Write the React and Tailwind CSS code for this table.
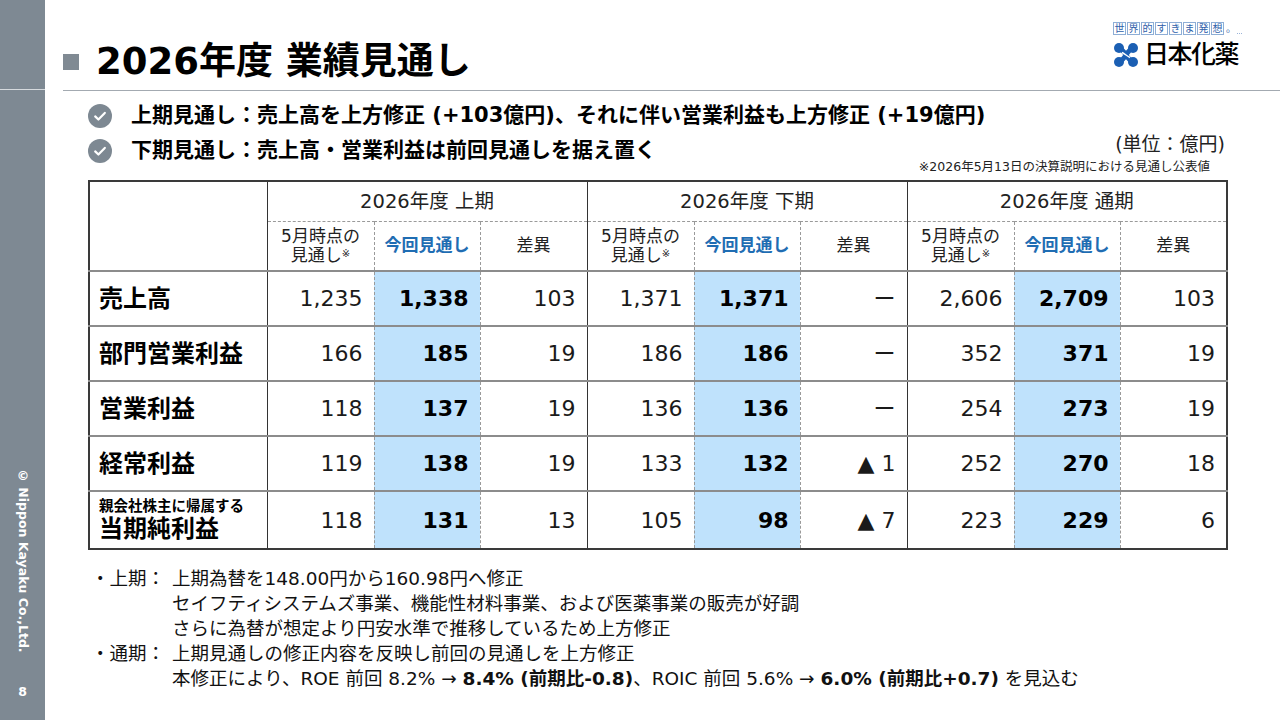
import React from "react";

const rows = [
  { label: "売上高", v: ["1,235", "1,338", "103", "1,371", "1,371", "ー", "2,606", "2,709", "103"] },
  { label: "部門営業利益", v: ["166", "185", "19", "186", "186", "ー", "352", "371", "19"] },
  { label: "営業利益", v: ["118", "137", "19", "136", "136", "ー", "254", "273", "19"] },
  { label: "経常利益", v: ["119", "138", "19", "133", "132", "▲ 1", "252", "270", "18"] },
  { label: null, v: ["118", "131", "13", "105", "98", "▲ 7", "223", "229", "6"] },
];

const groups = ["2026年度 上期", "2026年度 下期", "2026年度 通期"];

function CheckIcon() {
  return (
    <svg width="24" height="24" viewBox="0 0 24 24" className="shrink-0">
      <circle cx="12" cy="12" r="12" fill="#7d8892" />
      <path d="M7.2 12.4l3.2 3.1 6.4-6.6" fill="none" stroke="#fff" strokeWidth="2.2" strokeLinecap="round" strokeLinejoin="round" />
    </svg>
  );
}

function Logo() {
  const boxed = ["世", "界", "的", "す", "き", "ま", "発", "想"];
  return (
    <div className="flex flex-col pt-[22px]">
      <div className="flex items-center gap-[1px]">
        {boxed.map((c) => (
          <span key={c} className="shrink-0 w-[13px] h-[13px] border border-[#8eaed6] text-[#2f61aa] text-[10px] leading-[11px] flex items-center justify-center">
            {c}
          </span>
        ))}
        <span className="shrink-0 text-[#2f61aa] text-[10px] leading-[10px] ml-[1px]">。</span>
        <span className="shrink-0 w-[5px] border-b border-dotted border-[#9bb4d8] self-end mb-[1px]" />
      </div>
      <div className="flex items-center mt-[7px]">
        <svg width="26" height="26" viewBox="0 0 26 26" className="shrink-0">
          <g fill="#1b5fb3">
            <circle cx="6" cy="6" r="5" />
            <circle cx="20" cy="6" r="5" />
            <circle cx="6" cy="20" r="5" />
            <circle cx="20" cy="20" r="5" />
          </g>
          <path d="M6 6 C 13 9, 13 17, 20 20" fill="none" stroke="#1b5fb3" strokeWidth="5" />
          <path d="M20 6 C 13 9, 13 17, 6 20" fill="none" stroke="#1b5fb3" strokeWidth="5" />
          <path d="M9 10.5 C 12 12, 14 14, 17 15.5" fill="none" stroke="#fff" strokeWidth="1.4" />
        </svg>
        <span className="ml-[5px] text-[25px] leading-[26px] font-medium tracking-[-1.5px] text-black">日本化薬</span>
      </div>
    </div>
  );
}

function SubHeader({ i }) {
  const last = i % 3 === 2;
  const rb = last ? "[border-right:1px_solid_#333]" : "[border-right:1px_dashed_#9a9a9a]";
  const kind = i % 3;
  return (
    <th className={`${rb} [border-bottom:2px_solid_#8c8c8c] font-normal text-center align-middle`}>
      {kind === 0 && (
        <div className="text-[17px] leading-[19px] text-[#222]">
          5月時点の
          <br />
          見通し<span className="text-[10px] align-top relative top-[-2px]">※</span>
        </div>
      )}
      {kind === 1 && <div className="text-[17px] font-bold text-[#1f6db3]">今回見通し</div>}
      {kind === 2 && <div className="text-[17px] text-[#222]">差異</div>}
    </th>
  );
}

function App() {
  return (
    <div className="flex w-[1280px] h-[720px] bg-white overflow-hidden font-['DejaVu_Sans','Noto_Sans_CJK_JP',sans-serif] text-[#111]">
      {/* sidebar */}
      <aside className="w-[45px] shrink-0 bg-[#7e8993] flex flex-col">
        <div className="h-[90px] border-b-[1.5px] border-[#d6dade]" />
        <div className="flex-1 flex flex-col items-center justify-end pb-[21px]">
          <span className="[writing-mode:vertical-rl] text-white font-bold text-[12.5px] leading-[14px]">
            © Nippon Kayaku Co.,Ltd.
          </span>
          <span className="mt-[32px] text-white font-bold text-[12.5px] leading-[14px]">8</span>
        </div>
      </aside>

      <main className="w-[1235px] min-w-0 shrink-0 flex flex-col">
        {/* header */}
        <header className="ml-[18px] h-[91px] border-b border-[#a3aab1] flex justify-between pr-[38px]">
          <div className="flex items-center pt-[34px]">
            <span className="w-[16px] h-[16px] bg-[#808a93]" />
            <h1 className="ml-[17px] text-[37px] leading-[44px] font-bold text-black">2026年度 業績見通し</h1>
          </div>
          <Logo />
        </header>

        <div className="pl-[43px] pr-[54px] flex flex-col min-w-0">
          {/* summary */}
          <div className="w-[1138px] h-[89px] flex justify-between">
            <div className="min-w-0 pt-[7px] flex flex-col">
              <div className="h-[35px] flex items-center gap-[19px]">
                <CheckIcon />
                <span className="text-[21px] font-bold text-black whitespace-nowrap">
                  上期見通し：売上高を上方修正 (+103億円)、それに伴い営業利益も上方修正 (+19億円)
                </span>
              </div>
              <div className="h-[35px] flex items-center gap-[19px]">
                <CheckIcon />
                <span className="text-[21px] font-bold text-black whitespace-nowrap">
                  下期見通し：売上高・営業利益は前回見通しを据え置く
                </span>
              </div>
            </div>
            <div className="shrink-0 flex flex-col items-end justify-end pb-[6px]">
              <span className="text-[19px] leading-[22px] mb-[5px] pr-[1px] text-[#222] whitespace-nowrap">(単位：億円)</span>
              <span className="text-[12.5px] leading-[14px] pr-[16px] text-[#222] whitespace-nowrap">※2026年5月13日の決算説明における見通し公表値</span>
            </div>
          </div>

          {/* table */}
          <table className="w-[1138px] table-fixed border-collapse [border:2px_solid_#3a3a3a]">
            <colgroup>
              <col className="w-[178px]" />
              {[0, 1, 2].map((g) => (
                <React.Fragment key={g}>
                  <col className="w-[107px]" />
                  <col className="w-[106px]" />
                  <col className="w-[107px]" />
                </React.Fragment>
              ))}
            </colgroup>
            <thead>
              <tr className="h-[40px]">
                <th rowSpan={2} className="[border-right:1px_solid_#333] [border-bottom:2px_solid_#8c8c8c]" />
                {groups.map((g) => (
                  <th key={g} colSpan={3} className="[border-right:1px_solid_#333] [border-bottom:1px_dashed_#9a9a9a] font-normal text-[19.5px] text-[#222] text-center">
                    {g}
                  </th>
                ))}
              </tr>
              <tr className="h-[50px]">
                {Array.from({ length: 9 }).map((_, i) => (
                  <SubHeader key={i} i={i} />
                ))}
              </tr>
            </thead>
            <tbody>
              {rows.map((r, ri) => {
                const lastRow = ri === rows.length - 1;
                const bb = lastRow ? "" : "[border-bottom:2px_solid_#8c8c8c]";
                return (
                  <tr key={ri} className={lastRow ? "h-[58px]" : "h-[55px]"}>
                    <td className={`${bb} [border-right:1px_solid_#333] pl-[9px] align-middle`}>
                      {r.label ? (
                        <span className="text-[24px] font-bold text-black">{r.label}</span>
                      ) : (
                        <div className="flex flex-col">
                          <span className="text-[14.5px] leading-[17px] font-bold text-black">親会社株主に帰属する</span>
                          <span className="text-[24px] leading-[28px] font-bold text-black">当期純利益</span>
                        </div>
                      )}
                    </td>
                    {r.v.map((v, i) => {
                      const hl = i % 3 === 1;
                      const rb = i % 3 === 2 ? "[border-right:1px_solid_#333]" : "[border-right:1px_dashed_#9a9a9a]";
                      return (
                        <td
                          key={i}
                          className={`${bb} ${rb} ${hl ? "bg-[#bfe2fc] font-bold text-black" : "text-[#1a1a1a]"} text-right pr-[11px] text-[22px] align-middle whitespace-nowrap`}
                        >
                          {v}
                        </td>
                      );
                    })}
                  </tr>
                );
              })}
            </tbody>
          </table>

          {/* notes */}
          <div className="mt-[16px] ml-[3px] text-[18.5px] leading-[25px] text-[#111]">
            <div className="flex">
              <span className="w-[81px] shrink-0">・上期：</span>
              <div className="flex flex-col">
                <span>上期為替を148.00円から160.98円へ修正</span>
                <span>セイフティシステムズ事業、機能性材料事業、および医薬事業の販売が好調</span>
                <span>さらに為替が想定より円安水準で推移しているため上方修正</span>
              </div>
            </div>
            <div className="flex">
              <span className="w-[81px] shrink-0">・通期：</span>
              <div className="flex flex-col">
                <span>上期見通しの修正内容を反映し前回の見通しを上方修正</span>
                <span className="whitespace-nowrap">
                  本修正により、ROE 前回 8.2% → <b>8.4% (前期比-0.8)</b>、ROIC 前回 5.6% → <b>6.0% (前期比+0.7)</b> を見込む
                </span>
              </div>
            </div>
          </div>
        </div>
      </main>
    </div>
  );
}

export default App;
